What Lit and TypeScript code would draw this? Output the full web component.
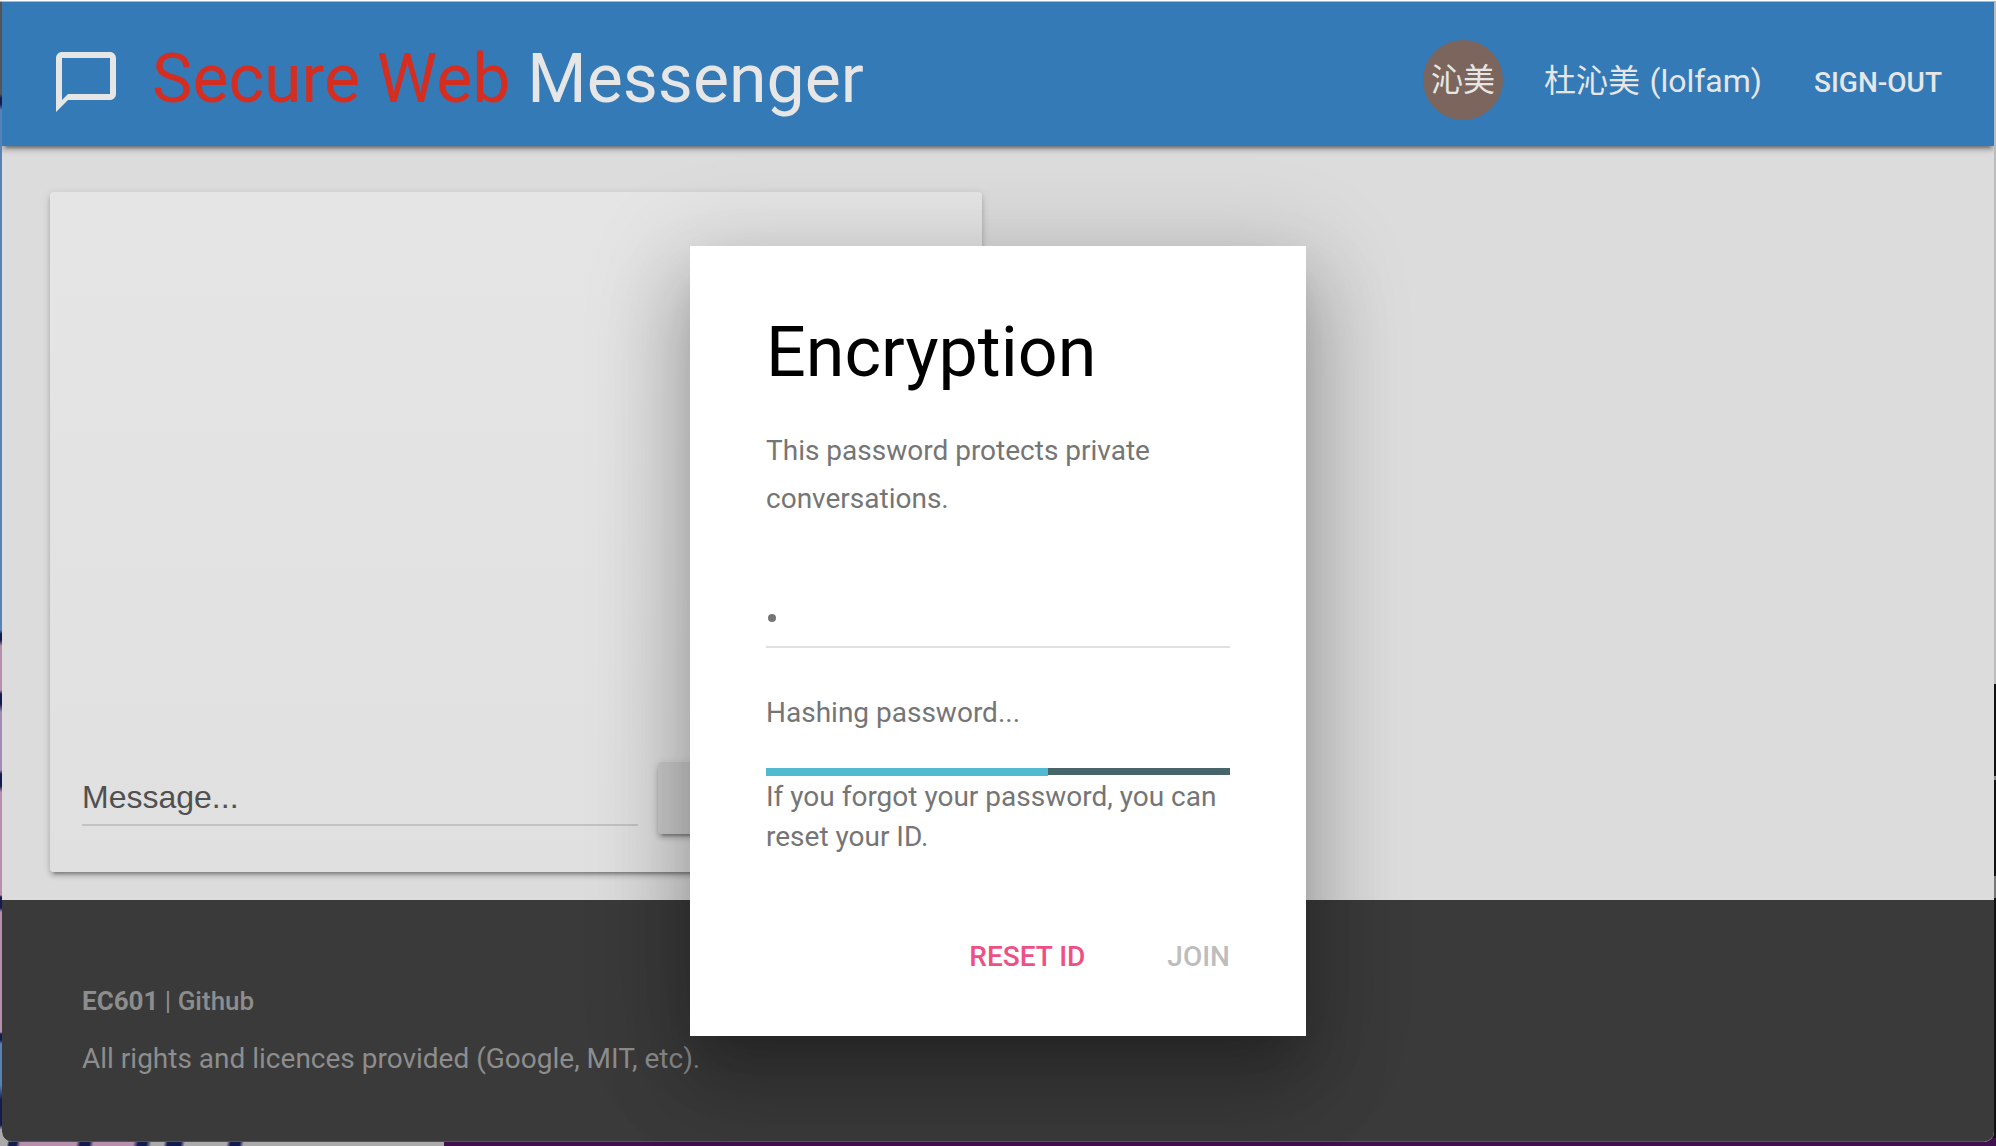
import { LitElement, html, css } from "lit";
import { customElement, property } from "lit/decorators.js";

@customElement("app-header")
class AppHeader extends LitElement {
  @property() user = "杜沁美 (lolfam)";
  @property() initials = "沁美";

  static styles = css`
    :host {
      display: flex;
      align-items: center;
      flex: none;
      height: 144px;
      box-sizing: border-box;
      padding: 0 52px 0 54px;
      background: #347ab7;
      color: #e6e6e6;
      position: relative;
      box-shadow: 0 4px 4px rgba(0, 0, 0, 0.2), 0 6px 2px -4px rgba(0, 0, 0, 0.24), 0 2px 10px rgba(0, 0, 0, 0.14);
    }
    .logo {
      width: 60px;
      height: 60px;
      margin-top: 16px;
    }
    .title {
      margin: 10px 0 0 36px;
      font-size: 68px;
      line-height: 80px;
      white-space: pre;
    }
    .accent {
      color: #d52e20;
    }
    .avatar {
      margin: 12px 41px 0 auto;
      width: 80px;
      height: 80px;
      border-radius: 50%;
      background: #7b655c;
      font-size: 32px;
      line-height: 80px;
      text-align: center;
      white-space: nowrap;
    }
    .user {
      font-size: 32px;
      line-height: 40px;
      margin-top: 14px;
      word-spacing: 1.5px;
      white-space: nowrap;
    }
    .signout {
      font-size: 28px;
      font-weight: 500;
      line-height: 40px;
      margin: 18px 0 0 52px;
      white-space: nowrap;
    }
  `;

  render() {
    return html`
      <svg class="logo" viewBox="2 2 20 20" fill="#e6e6e6">
        <path d="M20 2H4c-1.1 0-2 .9-2 2v18l4-4h14c1.1 0 2-.9 2-2V4c0-1.1-.9-2-2-2zm0 14H6l-2 2V4h16v12z" />
      </svg>
      <div class="title"><span class="accent">Secure Web</span> Messenger</div>
      <div class="avatar">${this.initials}</div>
      <div class="user">${this.user}</div>
      <div class="signout">SIGN-OUT</div>
    `;
  }
}

@customElement("message-card")
class MessageCard extends LitElement {
  static styles = css`
    :host {
      display: flex;
      align-items: flex-end;
      box-sizing: border-box;
      width: 932px;
      height: 680px;
      padding: 0 32px 38px;
      border-radius: 4px;
      background: linear-gradient(#e5e5e5, #e0e0e0);
      box-shadow: 0 4px 4px rgba(0, 0, 0, 0.16), 0 6px 2px -4px rgba(0, 0, 0, 0.22), 0 2px 10px rgba(0, 0, 0, 0.12);
    }
    .field {
      width: 556px;
      height: 56px;
      margin-bottom: 8px;
      box-sizing: border-box;
      border-bottom: 2px solid #c3c3c3;
      color: #505050;
      font: 32px/40px "Liberation Sans", sans-serif;
      padding-top: 7px;
    }
    .send {
      margin-left: 20px;
      flex: 1;
      height: 72px;
      border-radius: 4px;
      background: #cdcdcd;
      box-shadow: 0 4px 4px rgba(0, 0, 0, 0.16), 0 6px 2px -4px rgba(0, 0, 0, 0.22), 0 2px 10px rgba(0, 0, 0, 0.12);
    }
  `;

  render() {
    return html`
      <div class="field">Message...</div>
      <div class="send"></div>
    `;
  }
}

@customElement("encryption-dialog")
class EncryptionDialog extends LitElement {
  @property({ type: Number }) progress = 60.8;

  static styles = css`
    :host {
      display: flex;
      flex-direction: column;
      box-sizing: border-box;
      width: 616px;
      height: 790px;
      padding: 64px 76px 0;
      background: #fff;
      color: #757575;
      font-size: 28px;
      box-shadow: 0 18px 92px 16px rgba(0, 0, 0, 0.14), 0 22px 30px -14px rgba(0, 0, 0, 0.12),
        0 48px 76px 6px rgba(0, 0, 0, 0.2);
    }
    h4 {
      margin: 0;
      font-size: 70px;
      font-weight: 400;
      line-height: 84px;
      color: #000;
    }
    .lead {
      margin: 33px 0 0;
      line-height: 48px;
    }
    .field {
      display: flex;
      align-items: center;
      box-sizing: border-box;
      height: 58px;
      margin-top: 67px;
      border-bottom: 2px solid #e0e0e0;
      padding: 0 2px;
    }
    .dot {
      width: 8px;
      height: 8px;
      border-radius: 50%;
      background: #757575;
    }
    .status {
      margin-top: 41px;
      line-height: 48px;
    }
    .track {
      margin-top: 31px;
      height: 7px;
      background: #48656c;
    }
    .bar {
      height: 8px;
      background: #51b9d0;
    }
    .hint {
      margin-top: 2px;
      line-height: 40px;
    }
    .actions {
      display: flex;
      justify-content: flex-end;
      gap: 82px;
      margin-top: 80px;
      font-weight: 500;
      line-height: 40px;
    }
    .reset {
      color: #ee5084;
    }
    .join {
      color: #bdbdbd;
    }
  `;

  render() {
    return html`
      <h4>Encryption</h4>
      <p class="lead">This password protects private conversations.</p>
      <div class="field"><span class="dot"></span></div>
      <div class="status">Hashing password...</div>
      <div class="track"><div class="bar" style="width:${this.progress}%"></div></div>
      <div class="hint">If you forgot your password, you can reset your ID.</div>
      <div class="actions"><span class="reset">RESET ID</span><span class="join">JOIN</span></div>
    `;
  }
}

@customElement("app-root")
class AppRoot extends LitElement {
  static styles = css`
    :host {
      display: block;
      position: relative;
      box-sizing: border-box;
      width: 1996px;
      height: 1146px;
      padding: 2px 2px 4px;
      overflow: hidden;
      font-family: Roboto, "Noto Sans CJK SC", sans-serif;
      background:
        linear-gradient(#b5b5b5, #b5b5b5) 0 1px / 100% 1px no-repeat,
        linear-gradient(#fff, #fff) 0 0 / 100% 1px no-repeat,
        linear-gradient(100deg, #aaa 0 8px, #141b4d 10px 17px, #b58fac 21px 76px, #141b4d 80px 89px, #b58fac 93px 132px, #141b4d 137px 145px, #aaa 150px 162px, #141b4d 166px 179px, #aaa 183px 224px, #141b4d 228px 237px, #aaa 241px) 0 100% / 444px 8px no-repeat,
        linear-gradient(#40114f, #40114f) 100% 100% / 1552px 8px no-repeat,
        linear-gradient(#555 0 94px, #141b4d 98px 104px, #5682b7 110px 630px, #141b4d 634px 640px, #b58fac 646px 690px, #141b4d 694px 704px, #a28cb5 712px 770px, #141b4d 774px 786px, #b58fac 792px 895px, #141b4d 897px 908px, #b58fac 912px 1032px, #141b4d 1034px 1040px, #5682b7 1044px 1085px, #141b4d 1100px 1125px, #aaa 1130px) 0 0 / 8px 100% no-repeat,
        linear-gradient(#bbb 0 684px, #111 684px 776px, #888 776px 780px, #111 780px 876px, #777 876px 898px, #111 898px) 100% 0 / 8px 100% no-repeat;
    }
    .window {
      display: flex;
      flex-direction: column;
      height: 1140px;
      overflow: hidden;
      border-radius: 0 0 10px 10px;
      background: #dcdcdc;
    }
    main {
      flex: 1;
      padding: 46px 48px 28px;
    }
    footer {
      flex: none;
      box-sizing: border-box;
      height: 242px;
      padding: 81px 80px 0;
      background: #3a3a3a;
      border-bottom: 1px solid #555;
      border-radius: 0 0 10px 10px;
      color: #8d8d8d;
      font-size: 28px;
    }
    .links {
      line-height: 40px;
      font-size: 26px;
    }
    .links b {
      font-weight: 700;
    }
    .links span {
      font-weight: 500;
    }
    .rights {
      margin-top: 14px;
      line-height: 48px;
    }
    .modal {
      position: absolute;
      left: 690px;
      top: 246px;
    }
  `;

  render() {
    return html`
      <div class="window">
        <app-header></app-header>
        <main><message-card></message-card></main>
        <footer>
          <div class="links"><b>EC601</b> | <span>Github</span></div>
          <div class="rights">All rights and licences provided (Google, MIT, etc).</div>
        </footer>
      </div>
      <encryption-dialog class="modal"></encryption-dialog>
    `;
  }
}
